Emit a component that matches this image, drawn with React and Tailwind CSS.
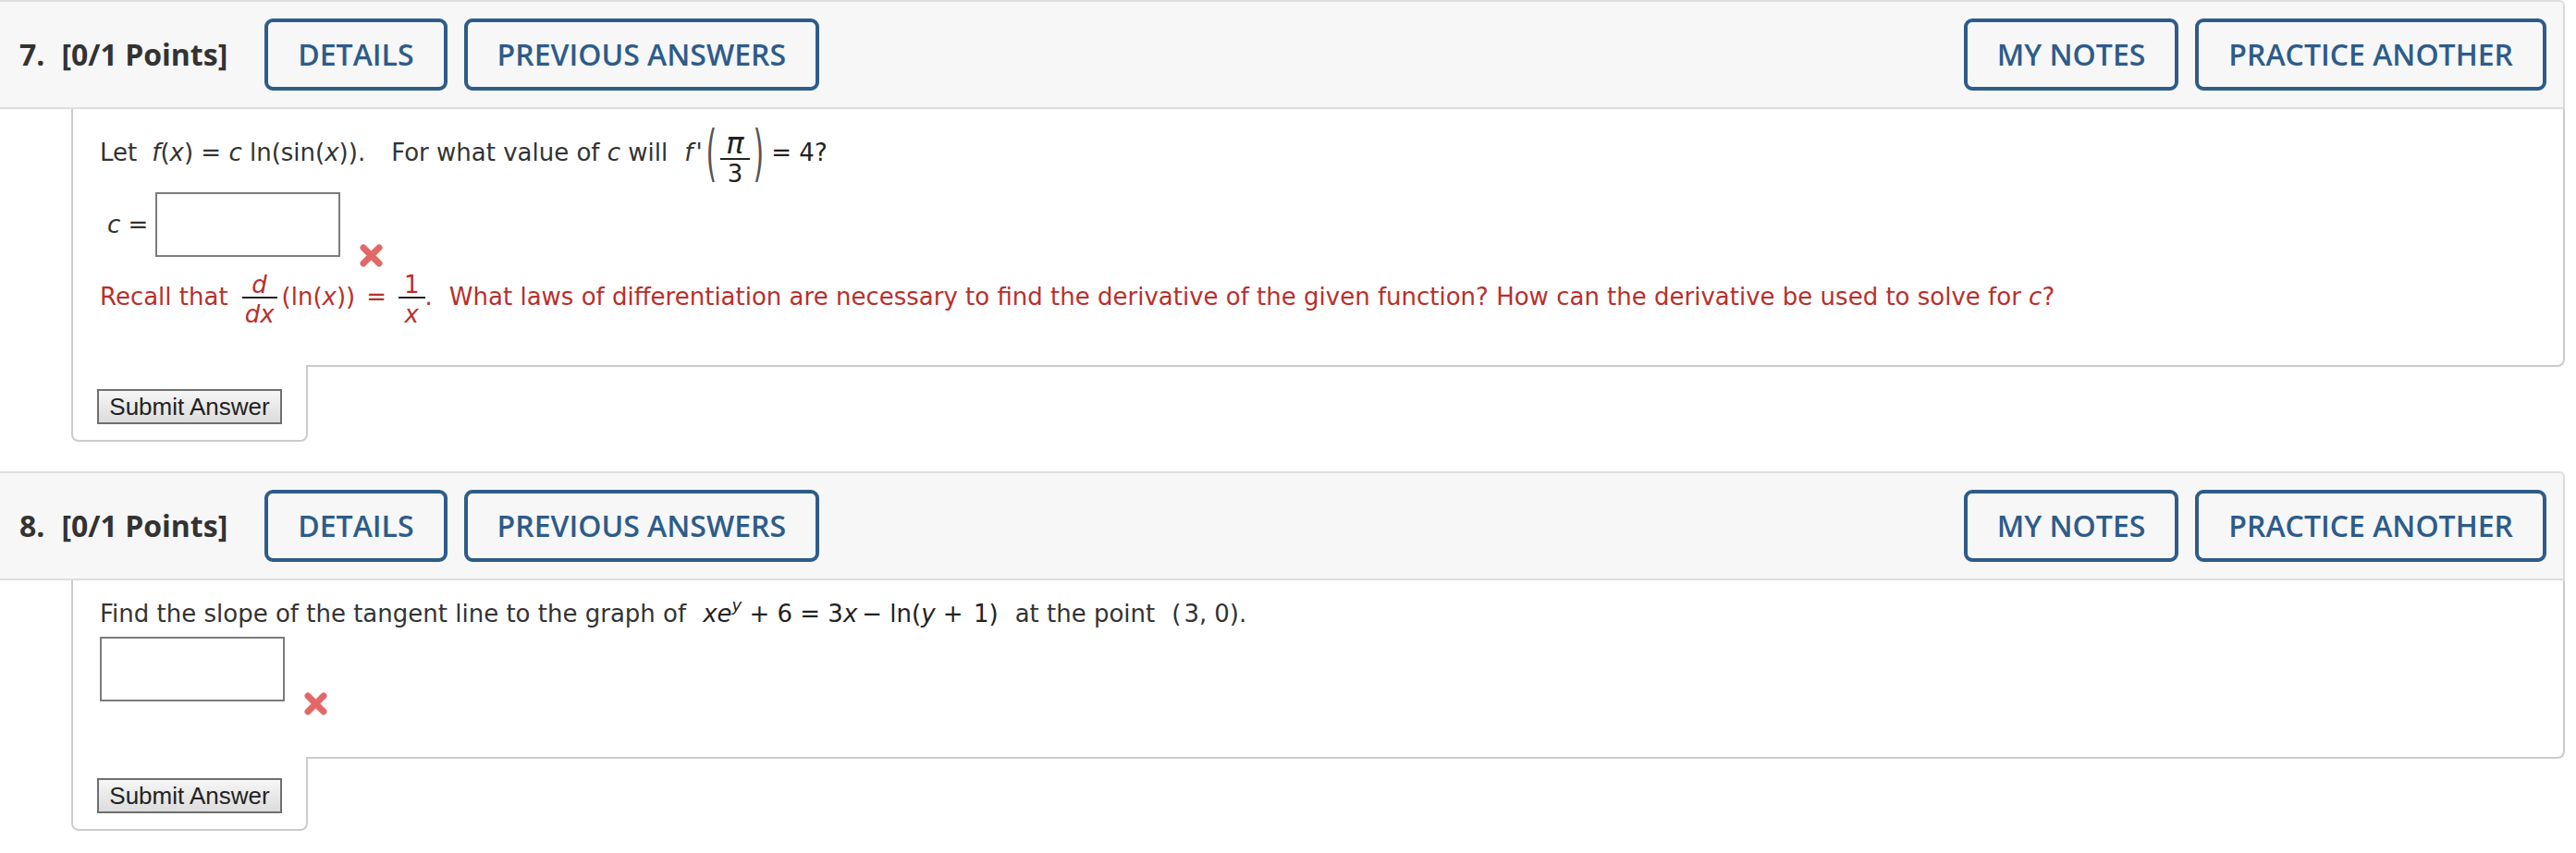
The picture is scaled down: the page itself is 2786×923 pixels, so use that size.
import React from "react";

const OS = "font-['Open_Sans',sans-serif]";

function HBtn({ children, className = "" }) {
  return (
    <div
      className={`h-[78px] px-[32px] border-[4px] border-[#2d5c8a] rounded-[9px] flex items-center text-[#2d5c8a] text-[32px] font-semibold leading-none ${OS} whitespace-nowrap ${className}`}
    >
      {children}
    </div>
  );
}

function Header({ num }) {
  return (
    <div className="h-[118px] bg-[#f7f7f7] border-t-2 border-b-2 border-r-2 border-[#dddddd] rounded-tr-[6px] flex items-center pl-[21px] pr-[18px]">
      <span className={`${OS} font-bold text-[32px] text-[#333333] leading-none`}>{num}</span>
      <span className={`${OS} font-bold text-[32px] text-[#333333] leading-none ml-[18px]`}>[0/1 Points]</span>
      <HBtn className="ml-[40px]">DETAILS</HBtn>
      <HBtn className="ml-[18px]">PREVIOUS ANSWERS</HBtn>
      <div className="flex-1" />
      <HBtn>MY NOTES</HBtn>
      <HBtn className="ml-[18px]">PRACTICE ANOTHER</HBtn>
    </div>
  );
}

function XMark({ className = "" }) {
  return (
    <svg className={`shrink-0 ${className}`} width="27" height="27" viewBox="0 0 27 27">
      <path d="M5 5 L22 22 M22 5 L5 22" stroke="#e26868" strokeWidth="7" strokeLinecap="round" />
    </svg>
  );
}

function SubmitNotch({ h, pt }) {
  return (
    <div
      className={`ml-[77px] w-[256px] ${h} -mt-[2px] relative bg-white border-l-2 border-r-2 border-b-2 border-[#cccccc] rounded-b-[8px] pl-[26px] ${pt}`}
    >
      <button className="w-[200px] h-[38px] border-2 border-[#6f6f6f] bg-linear-to-b from-[#f6f6f6] to-[#dcdcdc] text-[26px] leading-none text-[#222222] font-['Liberation_Sans',Arial,sans-serif]">
        Submit Answer
      </button>
    </div>
  );
}

const I = ({ children, className = "" }) => <i className={`italic ${className}`}>{children}</i>;

function BigParen({ ch, className = "" }) {
  return (
    <span
      className={`inline-block text-[30px] leading-none text-[#555555] scale-y-[2.2] translate-y-[2px] font-['DejaVu_Sans',sans-serif] ${className}`}
    >
      {ch}
    </span>
  );
}

export default function App() {
  return (
    <div className="w-[2786px] h-[923px] bg-white overflow-hidden font-['DejaVu_Sans',Verdana,sans-serif]">
      <div className="w-[2774px]">
        {/* Question 7 */}
        <Header num="7." />
        <div className="ml-[77px] h-[279px] border-l-2 border-r-2 border-b-2 border-[#cccccc] rounded-br-[8px] pl-[29px] pt-[21px] text-[26px] text-[#333333]">
          <div className="leading-[30px] whitespace-nowrap">
            <span>Let</span>
            <span className="ml-[16px]">
              <I>f</I>(<I>x</I>) = <I>c</I> ln(sin(<I>x</I>)).
            </span>
            <span className="ml-[28px]">
              For what value of <I>c</I> will
            </span>
            <span className="ml-[18px]">
              <I>f</I>
              <span className="ml-[3px]">'</span>
            </span>
            <BigParen ch="(" className="ml-[4px]" />
            <span className="inline-flex flex-col items-center align-[8px] mx-[4px]">
              <span className="block text-[32px] leading-[32px] px-[6px] text-[#222222]">
                <I>π</I>
              </span>
              <span className="block h-[2px] w-full bg-[#222222]" />
              <span className="block leading-[30px] px-[6px] text-[#222222]">3</span>
            </span>
            <BigParen ch=")" />
            <span className="ml-[8px] text-[#222222]">= 4?</span>
          </div>

          <div className="flex items-start mt-[5px]">
            <div className="h-[70px] flex items-center leading-[30px] pl-[8px] pr-[8px]">
              <I>c</I>&nbsp;=
            </div>
            <input
              readOnly
              className="w-[200px] h-[70px] border-2 border-[#7c7c7c] bg-white outline-none"
            />
            <XMark className="ml-[20px] mt-[55px]" />
          </div>

          <div className="mt-[5px] leading-[30px] text-[#b92f2c] whitespace-nowrap">
            <span>Recall that</span>
            <span className="inline-flex flex-col items-center align-[13px] ml-[15px]">
              <span className="block leading-[26px] px-[3px]">
                <I>d</I>
              </span>
              <span className="block h-[2px] w-full bg-[#222222]" />
              <span className="block leading-[34px] px-[3px]">
                <I>dx</I>
              </span>
            </span>
            <span className="ml-[5px]">
              (ln(<I>x</I>))
            </span>
            <span className="ml-[12px]">=</span>
            <span className="inline-flex flex-col items-center align-[13px] ml-[13px]">
              <span className="block leading-[26px] px-[6px]">1</span>
              <span className="block h-[2px] w-full bg-[#222222]" />
              <span className="block leading-[34px] px-[6px]">
                <I>x</I>
              </span>
            </span>
            <span>.</span>
            <span className="ml-[18px]">
              What laws of differentiation are necessary to find the derivative of the given function? How can the
              derivative be used to solve for <I>c</I>?
            </span>
          </div>
        </div>
        <SubmitNotch h="h-[83px]" pt="pt-[26px]" />

        {/* Question 8 */}
        <div className="mt-[32px]">
          <Header num="8." />
        </div>
        <div className="ml-[77px] h-[193px] border-l-2 border-r-2 border-b-2 border-[#cccccc] rounded-br-[8px] pl-[29px] pt-[21px] text-[26px] text-[#333333]">
          <div className="leading-[30px] whitespace-nowrap">
            <span>Find the slope of the tangent line to the graph of</span>
            <span className="ml-[18px] text-[#222222]">
              <I>xe</I>
              <I className="relative -top-[12px] text-[18px] leading-none">y</I> + 6 = 3<I>x</I>
              <span className="ml-[5px]">−</span> ln(<I>y</I> +<span className="ml-[3px]"> 1)</span>
            </span>
            <span className="ml-[18px]">at the point</span>
            <span className="ml-[18px]">
              (<span className="ml-[3px]">3,</span>
              <span className="ml-[8px]">0)</span>.
            </span>
          </div>
          <div className="flex items-start mt-[10px]">
            <input
              readOnly
              className="w-[200px] h-[70px] border-2 border-[#7c7c7c] bg-white outline-none"
            />
            <XMark className="ml-[20px] mt-[59px]" />
          </div>
        </div>
        <SubmitNotch h="h-[80px]" pt="pt-[23px]" />
      </div>
    </div>
  );
}
